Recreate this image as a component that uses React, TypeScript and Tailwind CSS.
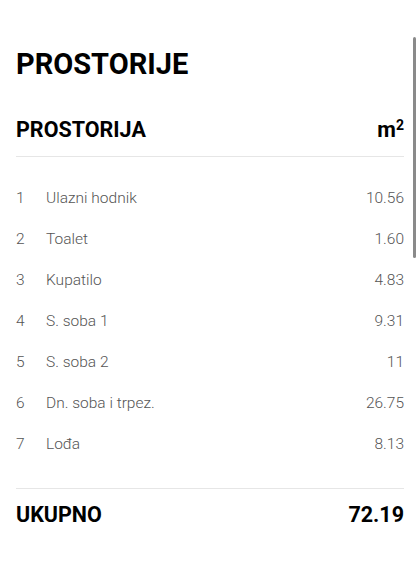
const ROOMS = [
  { no: 1, name: "Ulazni hodnik", area: "10.56" },
  { no: 2, name: "Toalet", area: "1.60" },
  { no: 3, name: "Kupatilo", area: "4.83" },
  { no: 4, name: "S. soba 1", area: "9.31" },
  { no: 5, name: "S. soba 2", area: "11" },
  { no: 6, name: "Dn. soba i trpez.", area: "26.75" },
  { no: 7, name: "Lo\u0111a", area: "8.13" },
];

export default function App() {
  return (
    <div className="relative h-[585px] w-[420px] overflow-hidden bg-white font-['Roboto',sans-serif]">
      <div className="px-4 pt-[46px]">
        <h1 className="text-[29px] leading-[36px] font-bold text-black">PROSTORIJE</h1>

        <div className="mt-[36px] flex items-start justify-between text-[21.5px] leading-[24px] font-bold text-black">
          <span>PROSTORIJA</span>
          <span>
            m<sup className="text-[14px] leading-none">2</sup>
          </span>
        </div>
        <div className="mt-[14px] h-px bg-[#e6e6e6]" />

        {/* room rows */}
        <div className="mt-[21px]">
          {ROOMS.map((room) => (
            <div key={room.no} className="flex h-[41px] items-center text-[15.5px] font-light text-[#555]">
              <span className="w-[30px]">{room.no}</span>
              <span className="flex-1">{room.name}</span>
              <span>{room.area}</span>
            </div>
          ))}
        </div>

        <div className="mt-[23px] h-px bg-[#e6e6e6]" />
        <div className="mt-[14px] flex justify-between text-[21.5px] leading-[24px] font-bold text-black">
          <span>UKUPNO</span>
          <span>72.19</span>
        </div>
      </div>

      {/* scroll indicator */}
      <div className="absolute top-[37px] right-[4px] h-[221px] w-[3px] rounded-full bg-[#8a8a8a]" />
    </div>
  );
}
